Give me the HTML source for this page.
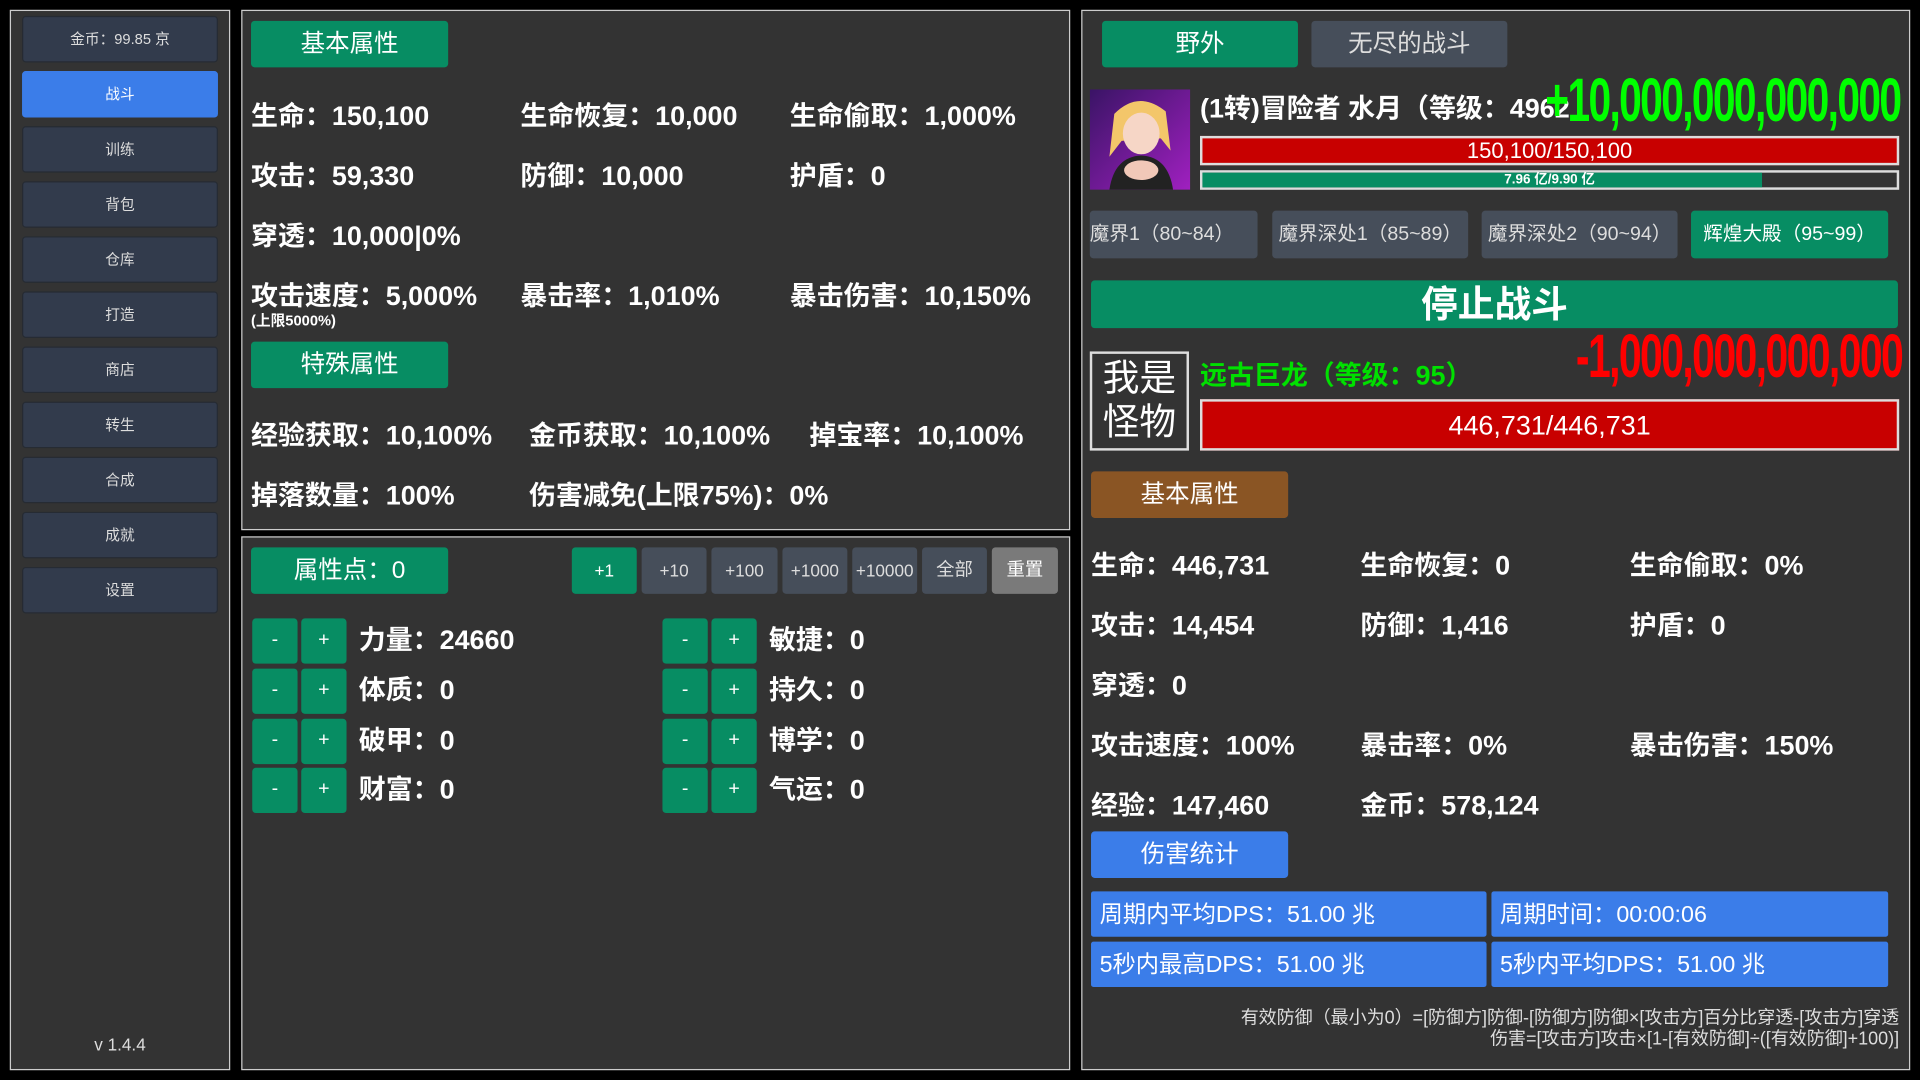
<!DOCTYPE html>
<html><head><meta charset="utf-8"><style>
html,body{margin:0;padding:0;background:#000;width:1920px;height:1080px;overflow:hidden}
#w{position:absolute;left:0;top:0;width:1568px;height:882px;transform:scale(1.22449);transform-origin:0 0;font-family:"Liberation Sans","Noto Sans CJK SC",sans-serif;color:#fff}
.a{position:absolute}
.p{position:absolute;background:#333;border:1px solid #ccc;box-sizing:border-box}
.sb{position:absolute;left:18px;width:160px;height:38px;background:#323b4c;border:1px solid #262b33;border-radius:3px;box-sizing:border-box;font-size:12px;line-height:36px;text-align:center;color:#ddd}
.b{position:absolute;height:38px;border-radius:3px;text-align:center;line-height:38px;color:#fff}
.g{background:#078d63}.gr{background:#464e5a;color:#ddd}
.t{position:absolute;font-size:22px;font-weight:bold;white-space:nowrap;line-height:26px;top:0}
.pm{position:absolute;width:37px;height:37px;background:#078d63;border-radius:3px;text-align:center;line-height:36px;font-size:16px}
.blue{position:absolute;background:#3b7de9;height:37px;line-height:37px;font-size:19px;padding-left:7px;box-sizing:border-box;border-radius:2px}
</style></head><body><div id="w">
<div class="p" style="left:8px;top:8px;width:180px;height:866px"></div>
<div class="sb" style="top:13px">金币：99.85 京</div>
<div class="sb" style="top:58px;background:#3b7de9;border-color:#3b7de9;color:#fff">战斗</div>
<div class="sb" style="top:103px">训练</div>
<div class="sb" style="top:148px">背包</div>
<div class="sb" style="top:193px">仓库</div>
<div class="sb" style="top:238px">打造</div>
<div class="sb" style="top:283px">商店</div>
<div class="sb" style="top:328px">转生</div>
<div class="sb" style="top:373px">合成</div>
<div class="sb" style="top:418px">成就</div>
<div class="sb" style="top:463px">设置</div>
<div class="a" style="left:8px;width:180px;top:845px;text-align:center;font-size:14px;color:#ddd">v 1.4.4</div>

<div class="p" style="left:197px;top:8px;width:677px;height:425px"></div>
<div class="b g" style="left:205px;top:17px;width:161px;font-size:20px">基本属性</div>
<div class="t" style="left:205px;top:82px">生命：150,100</div>
<div class="t" style="left:425px;top:82px">生命恢复：10,000</div>
<div class="t" style="left:645px;top:82px">生命偷取：1,000%</div>
<div class="t" style="left:205px;top:131px">攻击：59,330</div>
<div class="t" style="left:425px;top:131px">防御：10,000</div>
<div class="t" style="left:645px;top:131px">护盾：0</div>
<div class="t" style="left:205px;top:180px">穿透：10,000|0%</div>
<div class="t" style="left:205px;top:229px">攻击速度：5,000%</div>
<div class="t" style="left:425px;top:229px">暴击率：1,010%</div>
<div class="t" style="left:645px;top:229px">暴击伤害：10,150%</div>
<div class="t" style="left:205px;top:255px;font-size:12px;line-height:14px">(上限5000%)</div>
<div class="b g" style="left:205px;top:279px;width:161px;font-size:20px">特殊属性</div>
<div class="t" style="left:205px;top:343px">经验获取：10,100%</div>
<div class="t" style="left:432px;top:343px">金币获取：10,100%</div>
<div class="t" style="left:661px;top:343px">掉宝率：10,100%</div>
<div class="t" style="left:205px;top:392px">掉落数量：100%</div>
<div class="t" style="left:432px;top:392px">伤害减免(上限75%)：0%</div>

<div class="p" style="left:197px;top:438px;width:677px;height:436px"></div>
<div class="b g" style="left:205px;top:447px;width:161px;font-size:20px">属性点：0</div>
<div class="b g" style="left:467px;top:447px;width:53px;font-size:14px">+1</div>
<div class="b gr" style="left:524px;top:447px;width:53px;font-size:14px">+10</div>
<div class="b gr" style="left:581px;top:447px;width:54px;font-size:14px">+100</div>
<div class="b gr" style="left:639px;top:447px;width:53px;font-size:14px">+1000</div>
<div class="b gr" style="left:696px;top:447px;width:53px;font-size:14px">+10000</div>
<div class="b gr" style="left:753px;top:447px;width:53px;font-size:15px">全部</div>
<div class="b" style="left:810px;top:447px;width:54px;font-size:15px;background:#7a7a7a">重置</div>

<div class="pm" style="left:206px;top:505px">-</div><div class="pm" style="left:246px;top:505px">+</div><div class="t" style="left:293px;top:510px">力量：24660</div>
<div class="pm" style="left:206px;top:546px">-</div><div class="pm" style="left:246px;top:546px">+</div><div class="t" style="left:293px;top:551px">体质：0</div>
<div class="pm" style="left:206px;top:587px">-</div><div class="pm" style="left:246px;top:587px">+</div><div class="t" style="left:293px;top:592px">破甲：0</div>
<div class="pm" style="left:206px;top:627px">-</div><div class="pm" style="left:246px;top:627px">+</div><div class="t" style="left:293px;top:632px">财富：0</div>
<div class="pm" style="left:541px;top:505px">-</div><div class="pm" style="left:581px;top:505px">+</div><div class="t" style="left:628px;top:510px">敏捷：0</div>
<div class="pm" style="left:541px;top:546px">-</div><div class="pm" style="left:581px;top:546px">+</div><div class="t" style="left:628px;top:551px">持久：0</div>
<div class="pm" style="left:541px;top:587px">-</div><div class="pm" style="left:581px;top:587px">+</div><div class="t" style="left:628px;top:592px">博学：0</div>
<div class="pm" style="left:541px;top:627px">-</div><div class="pm" style="left:581px;top:627px">+</div><div class="t" style="left:628px;top:632px">气运：0</div>

<div class="p" style="left:883px;top:8px;width:677px;height:866px"></div>
<div class="b g" style="left:900px;top:17px;width:160px;font-size:20px">野外</div>
<div class="b gr" style="left:1071px;top:17px;width:160px;font-size:20px">无尽的战斗</div>
<svg class="a" style="left:890px;top:73px" width="82" height="82"><defs><linearGradient id="bg" x1="0" y1="0" x2="1" y2="1"><stop offset="0" stop-color="#3a1466"/><stop offset="1" stop-color="#a020c0"/></linearGradient></defs><rect width="82" height="82" fill="url(#bg)"/><path d="M20 20 Q40 0 62 18 L66 50 L58 40 L26 42 L16 55 Z" fill="#f3c66a"/><ellipse cx="42" cy="36" rx="15" ry="17" fill="#f6d6c6"/><path d="M16 82 Q20 55 42 54 Q64 55 68 82Z" fill="#222"/><ellipse cx="42" cy="66" rx="14" ry="8" fill="#f1c8b8"/></svg>
<div class="t" style="left:980px;top:76px">(1转)冒险者 水月（等级：4962</div>
<div class="t" style="left:1262px;top:57px;font-size:50px;line-height:50px;color:#00ff00;letter-spacing:-2px;transform:scaleX(0.665);transform-origin:0 0">+10,000,000,000,000</div>
<div class="a" style="left:980px;top:111px;width:571px;height:24px;background:#c80000;border:2px solid #ddd;box-sizing:border-box;text-align:center;font-size:18px;line-height:20px">150,100/150,100</div>
<div class="a" style="left:980px;top:139px;width:571px;height:16px;background:#333;border:2px solid #ddd;box-sizing:border-box"><div style="width:457px;height:12px;background:#078d63"></div></div>
<div class="a" style="left:980px;top:139px;width:571px;text-align:center;font-size:11px;font-weight:bold;line-height:16px">7.96 亿/9.90 亿</div>
<div class="b gr" style="left:890px;top:172px;width:137px;font-size:16px;text-align:left;line-height:40px;height:39px">魔界1（80~84）</div>
<div class="b gr" style="left:1039px;top:172px;width:160px;font-size:16px;height:39px;line-height:40px">魔界深处1（85~89）</div>
<div class="b gr" style="left:1210px;top:172px;width:160px;font-size:16px;height:39px;line-height:40px">魔界深处2（90~94）</div>
<div class="b g" style="left:1381px;top:172px;width:161px;font-size:16px;height:39px;line-height:40px">辉煌大殿（95~99）</div>
<div class="b g" style="left:891px;top:229px;width:659px;height:39px;font-size:30px;font-weight:bold;line-height:41px">停止战斗</div>
<div class="a" style="left:890px;top:287px;width:81px;height:81px;border:2px solid #ddd;box-sizing:border-box;font-size:30px;line-height:36px;text-align:center;padding-top:3px">我是<br>怪物</div>
<div class="t" style="left:980px;top:294px;color:#00e000">远古巨龙（等级：95）</div>
<div class="t" style="left:1287px;top:266px;font-size:50px;line-height:50px;color:#ff0000;letter-spacing:-2px;transform:scaleX(0.67);transform-origin:0 0">-1,000,000,000,000</div>
<div class="a" style="left:980px;top:326px;width:571px;height:42px;background:#c80000;border:2px solid #ddd;box-sizing:border-box;text-align:center;font-size:22px;line-height:40px">446,731/446,731</div>
<div class="b" style="left:891px;top:385px;width:161px;font-size:20px;background:#8a5524">基本属性</div>
<div class="t" style="left:891px;top:449px">生命：446,731</div>
<div class="t" style="left:1111px;top:449px">生命恢复：0</div>
<div class="t" style="left:1331px;top:449px">生命偷取：0%</div>
<div class="t" style="left:891px;top:498px">攻击：14,454</div>
<div class="t" style="left:1111px;top:498px">防御：1,416</div>
<div class="t" style="left:1331px;top:498px">护盾：0</div>
<div class="t" style="left:891px;top:547px">穿透：0</div>
<div class="t" style="left:891px;top:596px">攻击速度：100%</div>
<div class="t" style="left:1111px;top:596px">暴击率：0%</div>
<div class="t" style="left:1331px;top:596px">暴击伤害：150%</div>
<div class="t" style="left:891px;top:645px">经验：147,460</div>
<div class="t" style="left:1111px;top:645px">金币：578,124</div>
<div class="b" style="left:891px;top:679px;width:161px;font-size:20px;background:#3b7de9">伤害统计</div>
<div class="blue" style="left:891px;top:728px;width:323px;line-height:39px">周期内平均DPS：51.00 兆</div>
<div class="blue" style="left:1218px;top:728px;width:324px;line-height:39px">周期时间：00:00:06</div>
<div class="blue" style="left:891px;top:769px;width:323px;line-height:39px">5秒内最高DPS：51.00 兆</div>
<div class="blue" style="left:1218px;top:769px;width:324px;line-height:39px">5秒内平均DPS：51.00 兆</div>
<div class="a" style="right:17px;top:824px;text-align:right;font-size:14.7px;line-height:17px;color:#ddd;white-space:nowrap">有效防御（最小为0）=[防御方]防御-[防御方]防御×[攻击方]百分比穿透-[攻击方]穿透<br>伤害=[攻击方]攻击×[1-[有效防御]÷([有效防御]+100)]</div>
</div></body></html>
